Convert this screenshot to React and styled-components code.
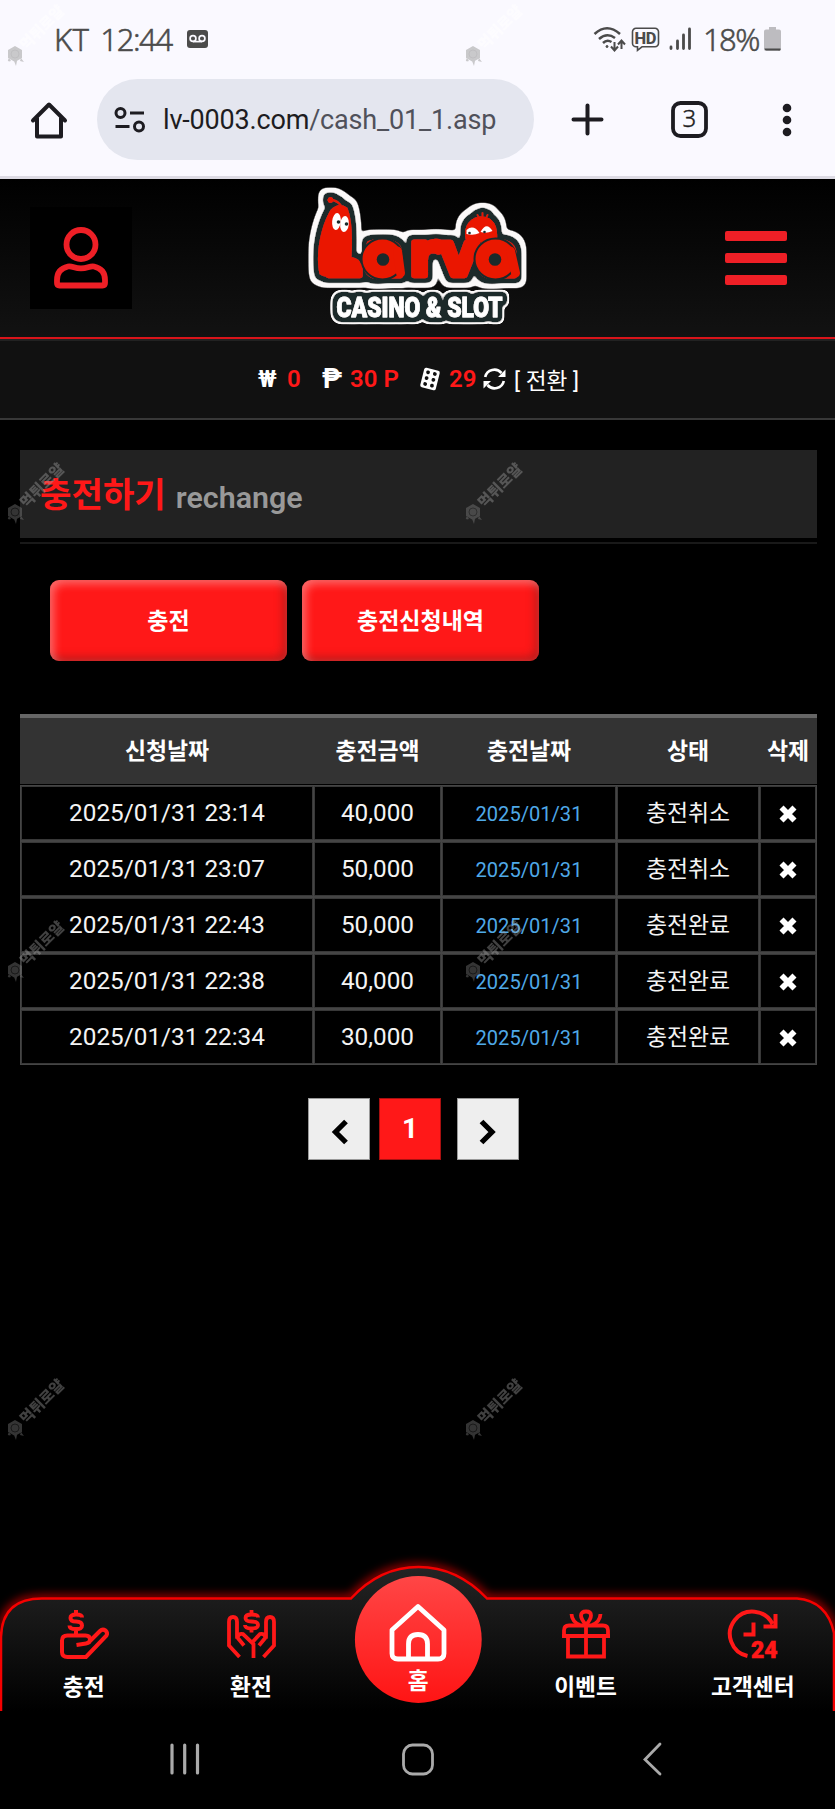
import styled, { createGlobalStyle, css } from "styled-components"

const GlobalStyle = createGlobalStyle`
  * {
    box-sizing: border-box;
  }
  body {
    margin: 0;
    background: #000;
    color: #fff;
    font-family: Roboto, "Noto Sans CJK KR", sans-serif;
  }
`

const Screen = styled.div`
  position: relative;
  width: 835px;
  height: 1809px;
  display: flex;
  flex-direction: column;
  overflow: hidden;
  background: #000;
`

/* phone status bar */
const StatusBar = styled.div`
  height: 79px;
  padding: 0 54px 1px 54px;
  display: flex;
  align-items: center;
  background: #faf9ff;
  color: #4b4b4b;
  font-family: "Noto Sans", sans-serif;
  font-size: 31px;
  font-weight: 300;
  -webkit-text-stroke: 0.5px #4b4b4b;
`

const Carrier = styled.span`
  letter-spacing: 0.3px;
  margin-right: 11px;
`

const Clock = styled.span`
  letter-spacing: -1.4px;
  margin-right: 15px;
`

const StatusRight = styled.div`
  margin-left: auto;
  display: flex;
  align-items: center;
`

const Percent = styled.span`
  letter-spacing: -1.5px;
  margin: 0 5px 0 11px;
`

const ToolGap = styled.span`
  width: ${(props) => (props.$wide ? 8 : 5)}px;
`

/* browser toolbar */
const Toolbar = styled.div`
  height: 100px;
  display: flex;
  align-items: flex-start;
  background: #faf9ff;
  border-bottom: 3px solid #dddbe4;
`

const ToolIcon = styled.div`
  width: ${(props) => props.$width}px;
  height: 81px;
  display: flex;
  align-items: center;
  justify-content: center;
`

const AddressBar = styled.div`
  width: 437px;
  height: 81px;
  padding-left: 17px;
  border-radius: 41px;
  background: #e4e6ef;
  color: #1d1c21;
  display: flex;
  align-items: center;
  gap: 17px;
  font-size: 27px;
  white-space: nowrap;
  letter-spacing: -0.18px;
`

const UrlPath = styled.span`
  color: #50515a;
`

/* site header */
const SiteHeader = styled.header`
  height: 160px;
  padding: 0 48px 1px 30px;
  display: flex;
  align-items: center;
  justify-content: space-between;
  background: linear-gradient(#000, #121212);
  border-bottom: 2px solid #d9141a;
`

const UserBox = styled.div`
  width: 102px;
  height: 102px;
  display: flex;
  align-items: center;
  justify-content: center;
  background: #000;
`

const LogoImage = styled.svg`
  width: 224px;
  height: 144px;
  margin: 0 22px 5px 0;
  overflow: visible;
`

const MenuButton = styled.div`
  width: 62px;
  display: flex;
  flex-direction: column;
  gap: 12px;
`

const MenuLine = styled.span`
  height: 10px;
  border-radius: 2px;
  background: #ee1f26;
`

const Wallet = styled.div`
  height: 81px;
  padding: 0 0 1px 258px;
  display: flex;
  align-items: center;
  background: #111;
  border-top: 2px solid #222;
  border-bottom: 2px solid #383838;
  font-size: 24px;
  white-space: nowrap;
`

const Sign = styled.span`
  width: ${(props) => props.$width}px;
  font-family: Roboto, sans-serif;
  font-size: ${(props) => props.$size}px;
  font-weight: 700;
`

const Amount = styled.span`
  width: ${(props) => props.$width}px;
  color: #ff1818;
  font-weight: 600;
`

const DiceSlot = styled.span`
  width: 30px;
  height: 25px;
`

const Exchange = styled.span`
  margin-left: 8px;
  font-size: 22.7px;
`

/* page body */
const Content = styled.main`
  flex: 1;
  padding: 30px 18px 0 20px;
`

const PageTitle = styled.div`
  height: 88px;
  width: 797px;
  padding: 2px 0 0 20px;
  display: flex;
  align-items: center;
  gap: 10px;
  background: #222;
`

const TitleRule = styled.div`
  width: 797px;
  height: 2px;
  margin-top: 4px;
  background: #191919;
`

const TitleMain = styled.h1`
  margin: 0;
  color: #ff1818;
  font-size: 34.2px;
  line-height: 46px;
  font-weight: 700;
`

const TitleSub = styled.span`
  margin-top: 4px;
  color: #999;
  font-size: 30.4px;
  font-weight: 600;
`

const Actions = styled.div`
  display: flex;
  gap: 15px;
  padding: 36px 0 53px 30px;
`

const ActionButton = styled.button`
  width: 237px;
  height: 81px;
  padding: 0 0 4px;
  border: 0;
  border-radius: 9px;
  background: #ff1818;
  box-shadow:
    inset 4px 4px 8px rgba(255, 255, 255, 0.35),
    inset -4px -4px 8px rgba(90, 30, 30, 0.4);
  color: #fff;
  font-family: inherit;
  font-size: 23px;
  font-weight: 700;
`

const columns = "292px 127px 174px 142px 56px"

const TableHead = styled.div`
  width: 797px;
  height: 70px;
  padding: 0 1px 4px;
  display: grid;
  grid-template-columns: ${columns};
  column-gap: 1px;
  align-items: center;
  background: #333;
  border-top: 4px solid #666;
  font-size: 22.9px;
  font-weight: 700;
  text-align: center;
  white-space: nowrap;
`

const TableBody = styled.div`
  width: 797px;
  margin-top: 1px;
  padding: 1px;
  display: grid;
  grid-template-columns: ${columns};
  grid-auto-rows: 54px;
  gap: 2px 1px;
  background: #454545;
`

const Cell = styled.div`
  display: flex;
  align-items: center;
  justify-content: center;
  padding-bottom: 2px;
  background: #000;
  border: 1px solid #383838;
  color: #f4f4f4;
  font-size: 24.3px;
  white-space: nowrap;
  ${(props) =>
    props.$link &&
    css`
      color: #4fa9e8;
      font-size: 20.1px;
      padding: 1px 0 0;
    `}
  ${(props) =>
    props.$status &&
    css`
      font-size: 22.9px;
      padding-bottom: 4px;
    `}
`

const Pager = styled.div`
  display: flex;
  margin: 33px 0 0 288px;
`

const PageButton = styled.div`
  width: 62px;
  height: 62px;
  padding-top: ${(props) => (props.$active ? 0 : 5)}px;
  margin-right: ${(props) => props.$gap || 0}px;
  display: flex;
  align-items: center;
  justify-content: center;
  background: ${(props) => (props.$active ? "#ff1818" : "#eee")};
  border: 1px solid ${(props) => (props.$active ? "#a81010" : "#999")};
  font-size: 28px;
  line-height: 58px;
  font-weight: 700;
`

/* bottom navigation */
const BottomNav = styled.nav`
  position: relative;
  height: 161px;
  display: grid;
  grid-template-columns: repeat(5, 167.3px);
`

const NavShape = styled.svg`
  position: absolute;
  left: 0;
  top: 0;
`

const NavItem = styled.div`
  position: relative;
  padding-top: ${(props) => (props.$home ? 53 : 59)}px;
  display: flex;
  flex-direction: column;
  align-items: center;
  gap: ${(props) => (props.$home ? 3 : 10)}px;

  svg {
    overflow: visible;
  }
`

const NavLabel = styled.span`
  font-size: 22.7px;
  line-height: ${(props) => (props.$home ? 34 : 37)}px;
  font-weight: 700;
`

const SystemBar = styled.div`
  height: 98px;
  padding: 0 0 2px 170px;
  display: flex;
  align-items: center;
`

const SystemHome = styled.svg`
  margin: 0 209px 0 202px;
`

const Mark = styled.div`
  position: absolute;
  left: ${(props) => props.$x}px;
  top: ${(props) => props.$y}px;
  display: flex;
  align-items: center;
  gap: 1px;
  transform: rotate(-45deg);
  transform-origin: 9px 11px;
  color: ${(props) => (props.$light ? "#fff" : "#aaa")};
  opacity: ${(props) => (props.$light ? 0.6 : 0.38)};
  font-size: 15px;
  line-height: 22px;
  font-weight: 900;
  white-space: nowrap;
`

function HomeIcon() {
  return (
    <svg width="38" height="38" viewBox="0 0 38 38" fill="none" stroke="#1d1c21" strokeWidth="4" strokeLinejoin="round" strokeLinecap="round">
      <path d="M3 19.500L19 3.500L35 19.500M7 17v18.500h24V17" />
    </svg>
  )
}

function VoicemailIcon() {
  return (
    <svg width="21" height="18" viewBox="0 0 21 18">
      <rect width="21" height="18" rx="3" fill="#4b4b4b" />
      <g fill="none" stroke="#faf9ff" strokeWidth="1.700">
        <circle cx="6" cy="8.500" r="2.900" />
        <circle cx="15" cy="8.500" r="2.900" />
        <path d="M6 11.600h9" />
      </g>
    </svg>
  )
}

function WifiIcon() {
  return (
    <svg width="33" height="26" viewBox="0 0 33 26" fill="none" stroke="#4b4b4b" strokeWidth="2.500">
      <path d="M1.500 8Q14 -3.500 27 8M6 13Q14 6 22 12M10 17Q14 13 18.500 16" />
      <circle cx="14" cy="20.500" r="1" fill="#4b4b4b" strokeWidth="1" />
      <path d="M21.500 16v8M18 20.500l3.500 4 3.500-4M28.500 23v-8M25 18.500l3.500-4 3.500 4" strokeWidth="2" />
    </svg>
  )
}

function HdIcon() {
  return (
    <svg width="29" height="25" viewBox="0 0 29 25">
      <path
        d="M5 1.300h19a3.500 3.500 0 0 1 3.500 3.500v11.500a3.500 3.500 0 0 1-3.500 3.500H11l-4.500 3.500v-3.500H5a3.500 3.500 0 0 1-3.500-3.500V4.800A3.500 3.500 0 0 1 5 1.300z"
        fill="none"
        stroke="#4b4b4b"
        strokeWidth="1.600"
      />
      <text x="14.500" y="16.500" textAnchor="middle" fontFamily="Roboto, sans-serif" fontSize="16.500" fontWeight="800" fill="#4b4b4b" textLength="22">
        HD
      </text>
    </svg>
  )
}

function SignalIcon() {
  return (
    <svg width="24" height="24" viewBox="0 0 24 24" stroke="#4b4b4b" strokeWidth="2.800" strokeLinecap="round">
      <path d="M3 20v1.500M9.500 14v7.500M15.500 8v13.500M21.500 2v19.500" />
    </svg>
  )
}

function BatteryIcon() {
  return (
    <svg width="17" height="24" viewBox="0 0 17 24">
      <path d="M5 0h7v2.500h3a2 2 0 0 1 2 2V22a2 2 0 0 1-2 2H2a2 2 0 0 1-2-2V4.500a2 2 0 0 1 2-2h3z" fill="#bdbcc0" />
      <path d="M.500 21.500h16a1.500 1.500 0 0 1-2 2h-12a2 2 0 0 1-2-2z" fill="#4b4b4b" />
    </svg>
  )
}

function SiteInfoIcon() {
  return (
    <svg width="32" height="28" viewBox="0 0 32 28" fill="none" stroke="#1d1c21" strokeWidth="3">
      <circle cx="6.500" cy="7" r="4.500" />
      <circle cx="25" cy="20.500" r="4.500" />
      <path d="M16 7h14M1.500 20.500h14" />
    </svg>
  )
}

function TabsIcon() {
  return (
    <svg width="37" height="37" viewBox="0 0 37 37">
      <rect x="2" y="2" width="33" height="33" rx="7.500" fill="none" stroke="#1d1c21" strokeWidth="3.800" />
      <text x="18.300" y="26" textAnchor="middle" fontFamily='"Noto Sans", sans-serif' fontSize="24" fontWeight="300" fill="#1d1c21" stroke="#1d1c21" strokeWidth="0.400">
        3
      </text>
    </svg>
  )
}

/* the outline of each part of the logo grows from its alpha: dark first, then white */
function OutlineFilter({ id, inner, outer }) {
  return (
    <filter id={id} x="-15%" y="-25%" width="130%" height="150%">
      <feMorphology in="SourceAlpha" operator="dilate" radius={inner * 0.6} result="a1" />
      <feGaussianBlur in="a1" stdDeviation={inner * 0.4} result="a2" />
      <feComponentTransfer in="a2" result="a3">
        <feFuncA type="linear" slope="6" intercept="-0.800" />
      </feComponentTransfer>
      <feFlood floodColor="#1a2a2b" />
      <feComposite in2="a3" operator="in" result="dark" />
      <feMorphology in="a3" operator="dilate" radius={outer * 0.6} result="b1" />
      <feGaussianBlur in="b1" stdDeviation={outer * 0.4} result="b2" />
      <feComponentTransfer in="b2" result="b3">
        <feFuncA type="linear" slope="6" intercept="-0.800" />
      </feComponentTransfer>
      <feFlood floodColor="#fbf9f9" />
      <feComposite in2="b3" operator="in" result="white" />
      <feMerge>
        <feMergeNode in="white" />
        <feMergeNode in="dark" />
        <feMergeNode in="SourceGraphic" />
      </feMerge>
    </filter>
  )
}

function Logo() {
  return (
    <LogoImage viewBox="15.500 8 224 144" strokeLinejoin="round" strokeLinecap="round">
      <defs>
        <OutlineFilter id="word" inner={5.500} outer={5} />
        <OutlineFilter id="tagline" inner={5} outer={2.200} />
      </defs>
      <g filter="url(#word)" fill="#ea1800" stroke="#ea1800">
        <path d="M176 66C171 46 186 41 192 42Q208 43 206 66Z" strokeWidth="1" />
        <path d="M189 44l-2-4M192 43v-5M195 44l2-4" strokeWidth="1.500" />
        <text x="33 74 119 149 188" y="100" fontFamily='"DejaVu Sans", sans-serif' fontSize="59" fontWeight="700" strokeWidth="6.500">
          Larva
        </text>
        <path d="M29 99C24 76 32 48 40 35Q49 26 57 33Q63 48 61 82Q72 84 70 93Q68 104 40 102Q32 102 29 99Z" stroke="none" />
        <path d="M50 30Q46 25 40 25" fill="none" strokeWidth="2" />
        <circle cx="40" cy="25" r="2.500" strokeWidth="1" />
      </g>
      <g filter="url(#tagline)">
        <text x="46" y="142" textLength="166" lengthAdjust="spacingAndGlyphs" fontFamily="Roboto, sans-serif" fontSize="28.500" fontWeight="900" fill="#fff" stroke="#fff" strokeWidth="0.800">
          CASINO &amp; SLOT
        </text>
      </g>
      <g fill="#ea1800">
        <ellipse cx="92" cy="84" rx="21" ry="20.500" stroke="#1a2a2b" strokeWidth="2" />
        <ellipse cx="205" cy="84" rx="21" ry="20.500" stroke="#1a2a2b" strokeWidth="2" />
        <path d="M107 76L110 98M220 76L225 98" stroke="#ea1800" strokeWidth="9" />
      </g>
      <g fill="#1a2a2b">
        <circle cx="92.500" cy="84.500" r="6.300" />
        <circle cx="204.500" cy="84.500" r="6.300" />
      </g>
      <g fill="#fff">
        <ellipse cx="46" cy="46.500" rx="4.300" ry="8.500" transform="rotate(6 46 46)" />
        <ellipse cx="54" cy="49" rx="4.300" ry="8" transform="rotate(6 54 49)" />
        <path d="M176 55q7-6 13 3q-6 3-13 1zM190 57q6-11 12-1q-6 3-12 1z" />
      </g>
      <g fill="#1a2a2b">
        <circle cx="48" cy="47" r="1.800" />
        <circle cx="56" cy="49" r="1.800" />
        <circle cx="179" cy="58" r="1.300" />
        <circle cx="194" cy="57" r="1.300" />
      </g>
    </LogoImage>
  )
}

function UserIcon() {
  return (
    <svg width="54" height="62" viewBox="0 0 54 62" fill="none" stroke="#ee1f26" strokeWidth="5.800" strokeLinejoin="round">
      <circle cx="27" cy="17.500" r="14.500" />
      <path d="M14 39.500Q16 39 20 40.300Q27 42.500 34 40.300Q38 39 40 39.500Q51 42 51 53V56Q51 58.500 48.500 58.500H5.500Q3 58.500 3 56V53Q3 42 14 39.500Z" />
    </svg>
  )
}

function DiceIcon() {
  const dots = [6, 12, 18]
  return (
    <svg width="22" height="24" viewBox="0 0 22 24">
      <g transform="rotate(14 11 12)">
        <rect x="3" y="2" width="16" height="20" rx="2" fill="#fff" />
        {dots.map((y) => (
          <g key={y} fill="#111">
            <circle cx="7.500" cy={y} r="1.900" />
            <circle cx="14.500" cy={y} r="1.900" />
          </g>
        ))}
      </g>
    </svg>
  )
}

function RefreshIcon() {
  return (
    <svg width="23" height="22" viewBox="0 0 23 22">
      <g fill="none" stroke="#fff" strokeWidth="2.700">
        <path d="M2.200 9A9.400 9.400 0 0 1 18.500 5" />
        <path d="M20.800 13A9.400 9.400 0 0 1 4.500 17" />
      </g>
      <path d="M22.500 1.500V9H15zM.500 20.500V13H8z" fill="#fff" />
    </svg>
  )
}

function DeleteIcon() {
  return (
    <svg width="18" height="18" viewBox="0 0 18 18" stroke="#fff" strokeWidth="5.700">
      <path d="M2.500 2.500L15.500 15.500M15.500 2.500L2.500 15.500" />
    </svg>
  )
}

function Chevron({ right }) {
  return (
    <svg width="18" height="26" viewBox="0 0 18 26" fill="none" stroke="#000" strokeWidth="5.300">
      <path d={right ? "M2.500 2.500L13 13L2.500 23.500" : "M16 2.500L5.500 13L16 23.500"} />
    </svg>
  )
}

function DepositIcon() {
  return (
    <svg width="50" height="50" viewBox="0 0 50 50" fill="none" stroke="#ff1818" strokeWidth="4">
      <path d="M23 8.500Q23 5.500 17 5.500Q11.500 5.500 11.500 9T17 12.500Q23 12.500 23 16.500T17 20Q10.500 20 10.500 16.500M17 1v4M17 20v5" />
      <path d="M17.500 36L27 34.500Q31 34 31 30.500Q31 26.500 26.500 26.500H8.500Q3 26.500 3 31.500V43Q3 48 8.500 48H27L47.500 26.500Q49 24 46.500 21.500Q43.500 19.500 41 22L30.500 32.500" />
    </svg>
  )
}

function WithdrawIcon() {
  return (
    <svg width="50" height="50" viewBox="0 0 50 50" fill="none" stroke="#ff1818" strokeWidth="3.800">
      <path d="M32 8.500Q32 5.500 25.500 5.500Q19.500 5.500 19.500 9T25.500 12.500Q32 12.500 32 16T25.500 19.500Q19 19.500 19 16M25.500 1v4M25.500 19.500v4" />
      <path d="M13.500 48L3 36.500V13Q3 8 7 8T11 13V28L18 36.500M11 30Q12 24 17 25L27.500 35V49" />
      <path d="M37.500 48L48 36.500V13Q48 8 44 8T40 13V28L33 36.500M40 30Q39 24 34 25L26.500 33" />
    </svg>
  )
}

function NavHomeIcon() {
  return (
    <svg width="60" height="59" viewBox="0 0 60 59" fill="none" stroke="#fff" strokeWidth="4.800" strokeLinejoin="round">
      <path d="M30 3.500L56 27V50.500Q56 56 50 56H10Q4 56 4 50.500V27Z" />
      <path d="M20.500 56V41Q20.500 31.500 30 31.500T39.500 41V56" />
    </svg>
  )
}

function GiftIcon() {
  return (
    <svg width="50" height="50" viewBox="0 0 50 50" fill="none" stroke="#ff1818" strokeWidth="3.800">
      <path d="M3 28V21.500Q3 16.500 8 16.500H42Q47 16.500 47 21.500V28M1 27H49M7 28V47.500H43V28M25 16v32" />
      <path d="M25 16Q20 10 20 6.500Q20 2.500 25 2.500T30 6.500Q30 10 25 16ZM10.500 5Q11 13 19 16M39.500 5Q39 13 31 16" />
    </svg>
  )
}

function SupportIcon() {
  return (
    <svg width="50" height="50" viewBox="0 0 50 50" fill="none" stroke="#ff1818" strokeWidth="4">
      <path d="M19.500 47A22.500 22.500 0 1 1 44.500 15M47.500 5V17.500H35.500M25.500 13.500V25.500H15.500" />
      <text x="23" y="49" fontFamily="Roboto, sans-serif" fontSize="24.500" fontWeight="900" fill="#ff1818" strokeWidth="0.600" textLength="26.500" lengthAdjust="spacingAndGlyphs">
        24
      </text>
    </svg>
  )
}

function NavBackground() {
  const edge = "M1 161V87Q2 48.500 42 48.500H351Q380 17 418.500 17Q457 17 487 48.500H797Q827 51 834 83V161"
  return (
    <NavShape width="835" height="161" viewBox="0 0 835 161">
      <defs>
        <linearGradient id="bar" x1="0" y1="17" x2="0" y2="161" gradientUnits="userSpaceOnUse">
          <stop offset="0" stopColor="#242424" />
          <stop offset="1" stopColor="#000" />
        </linearGradient>
        <linearGradient id="ball" x1="0" y1="0" x2="0" y2="1">
          <stop offset="0" stopColor="#ff4646" />
          <stop offset="1" stopColor="#ff1414" />
        </linearGradient>
        <filter id="glow" x="-5%" y="-20%" width="110%" height="140%">
          <feGaussianBlur stdDeviation="5" />
        </filter>
      </defs>
      <path d={edge} fill="none" stroke="#d00000" strokeWidth="6" filter="url(#glow)" />
      <path d={edge} fill="url(#bar)" stroke="#f50000" strokeWidth="2.500" />
      <circle cx="418.300" cy="89.500" r="63.400" fill="url(#ball)" />
    </NavShape>
  )
}

const rows = [
  ["2025/01/31 23:14", "40,000", "2025/01/31", "충전취소"],
  ["2025/01/31 23:07", "50,000", "2025/01/31", "충전취소"],
  ["2025/01/31 22:43", "50,000", "2025/01/31", "충전완료"],
  ["2025/01/31 22:38", "40,000", "2025/01/31", "충전완료"],
  ["2025/01/31 22:34", "30,000", "2025/01/31", "충전완료"],
]

const navItems = [
  { label: "충전", icon: <DepositIcon /> },
  { label: "환전", icon: <WithdrawIcon /> },
  { label: "홈", icon: <NavHomeIcon />, home: true },
  { label: "이벤트", icon: <GiftIcon /> },
  { label: "고객센터", icon: <SupportIcon /> },
]

function Watermark({ x, y, light }) {
  return (
    <Mark $x={x} $y={y} $light={light}>
      <svg width="19" height="22" viewBox="0 0 19 22">
        <g transform="rotate(45 9 11)">
          <path d="M9 2l7 4v8l-7 4-7-4V6zM3 14l-2 4 4-1zM15 14l3 4-4-1zM8 17h3l-1 5z" fill={light ? "#aaa" : "#888"} />
          <circle cx="9" cy="10" r="4" fill="none" stroke={light ? "#999" : "#444"} />
        </g>
      </svg>
      먹튀로얄
    </Mark>
  )
}

export default function App() {
  return (
    <Screen>
      <GlobalStyle />
      <StatusBar>
        <Carrier>KT</Carrier>
        <Clock>12:44</Clock>
        <VoicemailIcon />
        <StatusRight>
          <WifiIcon />
          <ToolGap />
          <HdIcon />
          <ToolGap $wide />
          <SignalIcon />
          <Percent>18%</Percent>
          <BatteryIcon />
        </StatusRight>
      </StatusBar>
      <Toolbar>
        <ToolIcon $width={97}>
          <HomeIcon />
        </ToolIcon>
        <AddressBar>
          <SiteInfoIcon />
          <span>
            lv-0003.com<UrlPath>/cash_01_1.asp</UrlPath>
          </span>
        </AddressBar>
        <ToolIcon $width={106}>
          <svg width="33" height="33" viewBox="0 0 33 33" stroke="#1d1c21" strokeWidth="4" strokeLinecap="round">
            <path d="M16.500 2.500v28M2.500 16.500h28" />
          </svg>
        </ToolIcon>
        <ToolIcon $width={98}>
          <TabsIcon />
        </ToolIcon>
        <ToolIcon $width={97}>
          <svg width="10" height="34" viewBox="0 0 10 34" fill="#1d1c21">
            <circle cx="5" cy="5" r="4.300" />
            <circle cx="5" cy="17" r="4.300" />
            <circle cx="5" cy="29" r="4.300" />
          </svg>
        </ToolIcon>
      </Toolbar>
      <SiteHeader>
        <UserBox>
          <UserIcon />
        </UserBox>
        <Logo />
        <MenuButton>
          <MenuLine />
          <MenuLine />
          <MenuLine />
        </MenuButton>
      </SiteHeader>
      <Wallet>
        <Sign $width={29} $size={23}>₩</Sign>
        <Amount $width={35}>0</Amount>
        <Sign $width={28} $size={27}>₱</Sign>
        <Amount $width={69}>30 P</Amount>
        <DiceSlot>
          <DiceIcon />
        </DiceSlot>
        <Amount $width={34}>29</Amount>
        <RefreshIcon />
        <Exchange>[ 전환 ]</Exchange>
      </Wallet>
      <Content>
        <PageTitle>
          <TitleMain>충전하기</TitleMain>
          <TitleSub>rechange</TitleSub>
        </PageTitle>
        <TitleRule />
        <Actions>
          <ActionButton>충전</ActionButton>
          <ActionButton>충전신청내역</ActionButton>
        </Actions>
        <TableHead>
          <span>신청날짜</span>
          <span>충전금액</span>
          <span>충전날짜</span>
          <span>상태</span>
          <span>삭제</span>
        </TableHead>
        <TableBody>
          {rows.map(([requested, amount, date, status]) => [
            <Cell key={requested}>{requested}</Cell>,
            <Cell key={requested + "amount"}>{amount}</Cell>,
            <Cell key={requested + "date"} $link>
              {date}
            </Cell>,
            <Cell key={requested + "status"} $status>
              {status}
            </Cell>,
            <Cell key={requested + "delete"} $link>
              <DeleteIcon />
            </Cell>,
          ])}
        </TableBody>
        <Pager>
          <PageButton $gap={9}>
            <Chevron />
          </PageButton>
          <PageButton $active $gap={16}>
            1
          </PageButton>
          <PageButton>
            <Chevron right />
          </PageButton>
        </Pager>
      </Content>
      <BottomNav>
        <NavBackground />
        {navItems.map((item) => (
          <NavItem key={item.label} $home={item.home}>
            {item.icon}
            <NavLabel $home={item.home}>{item.label}</NavLabel>
          </NavItem>
        ))}
      </BottomNav>
      <SystemBar>
        <svg width="30" height="32" viewBox="0 0 30 32" stroke="#aaa" strokeWidth="3.200" strokeLinecap="round">
          <path d="M2 2v28M14.700 2v28M27.500 2v28" />
        </svg>
        <SystemHome width="32" height="33" viewBox="0 0 32 33" fill="none" stroke="#aaa" strokeWidth="2.800">
          <rect x="1.500" y="2" width="29" height="29" rx="9" />
        </SystemHome>
        <svg width="19" height="34" viewBox="0 0 19 34" fill="none" stroke="#aaa" strokeWidth="2.800" strokeLinecap="round">
          <path d="M17 2L2 17.500L17 32" />
        </svg>
      </SystemBar>
      <Watermark x={6} y={44} light />
      <Watermark x={464} y={44} light />
      {[502, 960, 1418].map((y) => [
        <Watermark key={y} x={6} y={y} />,
        <Watermark key={y + "right"} x={464} y={y} />,
      ])}
    </Screen>
  )
}
